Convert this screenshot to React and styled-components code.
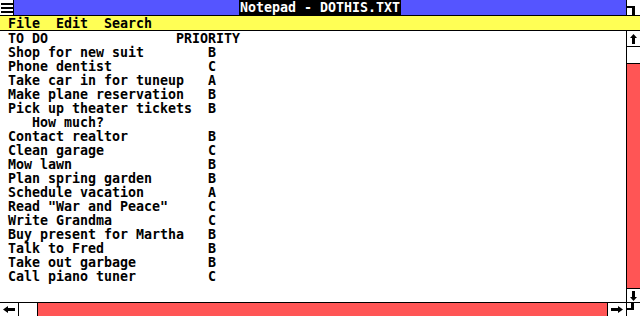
import React from 'react';
import styled, { createGlobalStyle } from 'styled-components';

const GlobalStyle = createGlobalStyle`
  html, body {
    margin: 0;
    padding: 0;
    background: #fff;
  }
  body {
    font-family: "DejaVu Sans Mono", "Liberation Mono", monospace;
  }
`;

const lines = [
  'TO DO                PRIORITY',
  'Shop for new suit        B',
  'Phone dentist            C',
  'Take car in for tuneup   A',
  'Make plane reservation   B',
  'Pick up theater tickets  B',
  '   How much?',
  'Contact realtor          B',
  'Clean garage             C',
  'Mow lawn                 B',
  'Plan spring garden       B',
  'Schedule vacation        A',
  'Read "War and Peace"     C',
  'Write Grandma            C',
  'Buy present for Martha   B',
  'Talk to Fred             B',
  'Take out garbage         B',
  'Call piano tuner         C',
];

const VArrow = ({ down }) => (
  <svg width="7" height="10" viewBox="0 0 7 10" style={{ transform: down ? 'rotate(180deg)' : 'none' }}>
    <polygon points="3.5,0 7,4 5,4 5,10 2,10 2,4 0,4" fill="#000" />
  </svg>
);

const HArrow = ({ right }) => (
  <svg width="12" height="7" viewBox="0 0 12 7" style={{ transform: right ? 'rotate(180deg)' : 'none' }}>
    <polygon points="0,3.5 5,0 5,2 12,2 12,5 5,5 5,7" fill="#000" />
  </svg>
);

const App = () => {
  return (
    <Window>
      <GlobalStyle />
      <TitleBar>
        <SystemBox>
          <svg width="12" height="11" viewBox="0 0 12 11">
            <rect x="0" y="1" width="12" height="2" fill="#000" />
            <rect x="0" y="5" width="12" height="2" fill="#000" />
            <rect x="0" y="9" width="12" height="2" fill="#000" />
          </svg>
        </SystemBox>
        <TitleArea>
          <Title>Notepad - DOTHIS.TXT</Title>
        </TitleArea>
        <CornerBox>
          <svg width="13" height="15" viewBox="0 0 13 15">
            <rect x="0" y="6" width="8" height="2" fill="#000" />
            <rect x="5" y="6" width="3" height="9" fill="#000" />
          </svg>
        </CornerBox>
      </TitleBar>
      <MenuBar>
        <MenuItem>File</MenuItem>
        <MenuItem>Edit</MenuItem>
        <MenuItem>Search</MenuItem>
      </MenuBar>
      <Body>
        <TextArea>{lines.join('\n')}</TextArea>
        <VScroll>
          <ScrollButton vertical>
            <VArrow />
          </ScrollButton>
          <VThumb />
          <Track />
          <ScrollButton vertical bottom>
            <VArrow down />
          </ScrollButton>
        </VScroll>
      </Body>
      <HScroll>
        <ScrollButton wide>
          <HArrow />
        </ScrollButton>
        <HThumb />
        <Track />
        <ScrollButton wide left>
          <HArrow right />
        </ScrollButton>
        <SizeCorner>
          <svg width="13" height="13" viewBox="0 0 13 13">
            <rect x="4" y="0" width="3" height="7" fill="#000" />
            <rect x="0" y="5" width="7" height="2" fill="#000" />
          </svg>
        </SizeCorner>
      </HScroll>
    </Window>
  );
};

export default App;

const Window = styled.div`
  width: 640px;
  height: 316px;
  display: flex;
  flex-direction: column;
  overflow: hidden;
  background: #fff;
  font-family: "DejaVu Sans Mono", "Liberation Mono", monospace;
  font-weight: bold;
  font-size: 13.29px;
`;

const TitleBar = styled.div`
  display: flex;
  height: 15px;
  flex-shrink: 0;
  background: #5555ff;
  border-bottom: 1px solid #000;
`;

const SystemBox = styled.div`
  width: 13px;
  background: #fff;
  border-right: 1px solid #000;
  display: flex;
  align-items: center;
  justify-content: center;
`;

const TitleArea = styled.div`
  flex: 1;
  display: flex;
  justify-content: center;
`;

const Title = styled.div`
  background: #000;
  color: #fff;
  padding: 0 1px;
  line-height: 15px;
  white-space: pre;
`;

const CornerBox = styled.div`
  width: 13px;
  background: #fff;
  border-left: 1px solid #000;
  display: flex;
`;

const MenuBar = styled.div`
  display: flex;
  gap: 16px;
  height: 14px;
  flex-shrink: 0;
  padding-left: 8px;
  background: #ffff55;
  border-bottom: 1px solid #000;
`;

const MenuItem = styled.div`
  line-height: 15px;
  color: #000;
`;

const Body = styled.div`
  flex: 1;
  display: flex;
  min-height: 0;
`;

const TextArea = styled.div`
  flex: 1;
  padding: 1px 0 0 8px;
  white-space: pre;
  line-height: 14px;
  color: #000;
  overflow: hidden;
`;

const VScroll = styled.div`
  width: 13px;
  display: flex;
  flex-direction: column;
  border-left: 1px solid #000;
`;

const ScrollButton = styled.div`
  flex-shrink: 0;
  display: flex;
  align-items: center;
  justify-content: center;
  background: #fff;
  width: ${(p) => (p.vertical ? 'auto' : '18px')};
  height: ${(p) => (p.vertical ? (p.bottom ? '13px' : '15px') : 'auto')};
  border-bottom: ${(p) => (p.vertical && !p.bottom ? '1px solid #000' : 'none')};
  border-top: ${(p) => (p.vertical && p.bottom ? '1px solid #000' : 'none')};
  border-right: ${(p) => (p.wide && !p.left ? '1px solid #000' : 'none')};
  border-left: ${(p) => (p.wide && p.left ? '1px solid #000' : 'none')};
`;

const VThumb = styled.div`
  height: 16px;
  flex-shrink: 0;
  background: #fff;
  border-bottom: 1px solid #000;
`;

const HThumb = styled.div`
  width: 18px;
  flex-shrink: 0;
  background: #fff;
  border-right: 1px solid #000;
`;

const Track = styled.div`
  flex: 1;
  background: #ff5555;
`;

const HScroll = styled.div`
  display: flex;
  height: 13px;
  flex-shrink: 0;
  border-top: 1px solid #000;
`;

const SizeCorner = styled.div`
  width: 13px;
  background: #fff;
  border-left: 1px solid #000;
  display: flex;
`;
